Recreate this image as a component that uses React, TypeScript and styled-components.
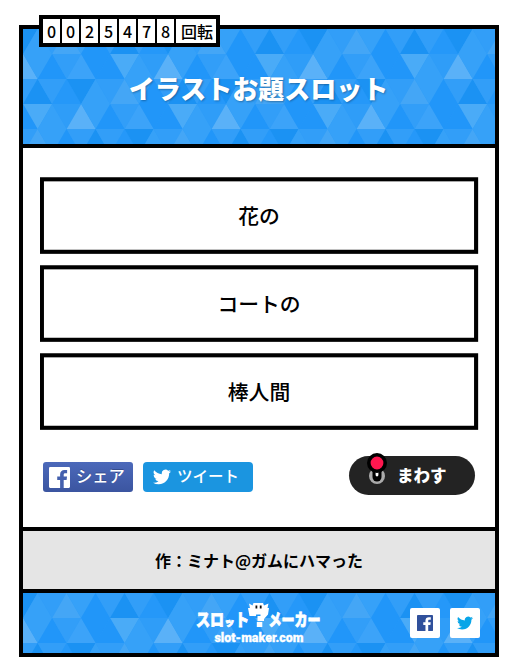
import React from "react";
import styled, { createGlobalStyle } from "styled-components";

const GlobalStyle = createGlobalStyle`
  * { box-sizing: border-box; }
  body {
    margin: 0;
    background: #fff;
    color: #000;
    font-family: "Noto Sans CJK JP", sans-serif;
  }
`;

const Page = styled.div`
  position: relative;
  height: 665px;
  padding: 25px 7px 8px 19px;
  overflow: hidden;
`;

const Machine = styled.div`
  display: flex;
  flex-direction: column;
  width: 480px;
  height: 632px;
  border: 4px solid #000;
`;

const Counter = styled.div`
  position: absolute;
  left: 39px;
  top: 15px;
  display: flex;
  gap: 2px;
  height: 32px;
  padding: 4px;
  background: #000;
`;

const Cell = styled.span<{ $wide?: boolean }>`
  display: flex;
  align-items: center;
  justify-content: center;
  width: ${(p) => (p.$wide ? 40 : 17)}px;
  padding-left: ${(p) => (p.$wide ? 2 : 0)}px;
  background: #fff;
  font-size: 16px;
  font-weight: 500;
  line-height: 24px;
`;

const Header = styled.header`
  position: relative;
  display: flex;
  align-items: center;
  justify-content: center;
  height: 119px;
  padding: 2px 1px 0 0;
  border-bottom: 4px solid #000;
`;

const Title = styled.h1`
  position: relative;
  margin: 0;
  color: #fff;
  font-size: 26px;
  font-weight: 900;
  line-height: 38px;
  text-shadow: 1px 1px 2px rgba(0, 0, 0, 0.3);
`;

const Backdrop = styled.svg`
  position: absolute;
  inset: 0;
  width: 100%;
  height: 100%;
`;

const Main = styled.main`
  height: 379px;
  padding: 29px 17px 0 17px;
`;

const Reels = styled.div`
  display: flex;
  flex-direction: column;
  gap: 11px;
`;

const Reel = styled.svg`
  display: block;
  width: 439px;
  height: 77px;
`;

const Actions = styled.div`
  display: flex;
  align-items: flex-start;
  padding: 26px 3.5px 0 3px;
`;

const ShareButton = styled.a<{ $twitter?: boolean }>`
  display: flex;
  align-items: center;
  width: ${(p) => (p.$twitter ? 110 : 90)}px;
  height: 30px;
  margin: 6px 10px 0 0;
  padding-left: ${(p) => (p.$twitter ? 10 : 6)}px;
  gap: 7px;
  border-radius: ${(p) => (p.$twitter ? 4 : 3)}px;
  background: ${(p) => (p.$twitter ? "#1b95e0" : "linear-gradient(#4c69ba, #3b55a0)")};
  color: #fff;
  font-size: ${(p) => (p.$twitter ? 15.5 : 16.3)}px;
  font-weight: 500;
  white-space: nowrap;
  text-shadow: ${(p) => (p.$twitter ? "none" : "0 -1px 0 #354c8c")};
`;

const ShareLabel = styled.span`
  height: 30px;
  margin-left: -1px;
  line-height: 27px;
`;

const SpinButton = styled.button`
  position: relative;
  width: 125.5px;
  height: 38.5px;
  margin: 0 0 0 auto;
  padding: 0 0 0 48px;
  border: 0;
  border-radius: 20px;
  background: #232323;
  color: #fff;
  font: 900 16.5px/36px "Noto Sans CJK JP", sans-serif;
  text-align: left;
`;

const Lever = styled.svg`
  position: absolute;
  left: 16.5px;
  top: -4px;
`;

const Author = styled.div`
  display: flex;
  align-items: center;
  justify-content: center;
  height: 66px;
  padding-bottom: 1px;
  border: solid #000;
  border-width: 4px 0;
  background: #e5e5e5;
  font-size: 16px;
  font-weight: 700;
`;

const Footer = styled.footer`
  position: relative;
  display: flex;
  align-items: center;
  justify-content: flex-end;
  gap: 10px;
  height: 60px;
  padding-right: 15px;
`;

const Logo = styled.svg`
  position: relative;
  margin-right: 55px;
`;

const Social = styled.a`
  position: relative;
  display: flex;
  align-items: center;
  justify-content: center;
  width: 30px;
  height: 30px;
  border-radius: 2px;
  background: #fff;
`;

// Two alternating bands of triangles; each pair of bands is shifted two cells right.
const bands = [
  {
    up: ["#36a1f8", "#44a6f6", "#2196f9", "#1b92f3", "#2598f9"],
    down: ["#329ef8", "#36a1f8", "#329ef8", "#329ef8", "#1b92f3"],
  },
  {
    up: ["#5ab1f8", "#2196f9", "#3ca3f9", "#2196f9", "#36a1f8"],
    down: ["#36a1f8", "#329ef8", "#2196f9", "#4aabf7", "#2f9df8"],
  },
];

function Triangles({ rows }: { rows: number }) {
  const shapes: React.ReactNode[] = [];
  for (let r = 0; r < rows; r++) {
    const band = bands[r % 2];
    const shift = Math.floor(r / 2) * 2;
    const y = r * 25;
    for (let i = -1; i < 18; i++) {
      const x = i * 29 + (r % 2 ? 0.2 : 14.6);
      const k = (i - shift + 50) % 5;
      shapes.push(
        <polygon key={`u${r}-${i}`} fill={band.up[k]} points={`${x},${y} ${x + 14.5},${y + 25} ${x - 14.5},${y + 25}`} />,
        <polygon key={`d${r}-${i}`} fill={band.down[k]} points={`${x},${y} ${x + 29},${y} ${x + 14.5},${y + 25}`} />
      );
    }
  }
  return (
    <Backdrop>
      <rect width="100%" height="100%" fill="#2d9bf8" />
      {shapes}
    </Backdrop>
  );
}

const BIRD =
  "M23.95 4.57a10 10 0 0 1-2.82.77 4.96 4.96 0 0 0 2.16-2.72c-.95.55-2 .95-3.13 1.18a4.92 4.92 0 0 0-8.38 4.48C7.69 8.1 4.07 6.13 1.64 3.16a4.92 4.92 0 0 0 1.52 6.57 4.9 4.9 0 0 1-2.23-.61v.06a4.92 4.92 0 0 0 3.95 4.83 5 5 0 0 1-2.21.08 4.94 4.94 0 0 0 4.6 3.42A9.87 9.87 0 0 1 0 19.54a13.99 13.99 0 0 0 7.55 2.21c9.05 0 14-7.5 14-13.98 0-.21 0-.42-.02-.63a9.94 9.94 0 0 0 2.46-2.55z";

function Bird({ size, color }: { size: number; color: string }) {
  return (
    <svg width={size} height={size} viewBox="0 0 24 24">
      <path d={BIRD} fill={color} />
    </svg>
  );
}

function FacebookTile({ size, color, mark }: { size: number; color: string; mark: string }) {
  return (
    <svg width={size} height={size} viewBox="0 0 24 24">
      <rect width="24" height="24" rx="1.3" fill={color} />
      <path
        d="M12.7 24v-9.1H9.4v-4h3.3V8.4c0-3.3 2-5.1 5-5.1 1.4 0 2.6.1 3 .15v3.8h-2c-1.6 0-1.9.7-1.9 1.8v1.85h3.8l-.5 4h-3.3V24z"
        fill={mark}
      />
    </svg>
  );
}

function SiteLogo() {
  return (
    <Logo width="150" height="48" viewBox="0 0 150 48" fill="#fff" fontFamily='"Noto Sans CJK JP", sans-serif' fontWeight="900">
      <g fontSize="17" stroke="#fff" strokeWidth="0.8">
        <text x="1" y="27" textLength="28" lengthAdjust="spacingAndGlyphs">スロ</text>
        <text x="29.5" y="27" fontSize="10" textLength="10" lengthAdjust="spacingAndGlyphs">ッ</text>
        <text x="40" y="27" textLength="14" lengthAdjust="spacingAndGlyphs">ト</text>
        <text x="73.5" y="27" textLength="52" lengthAdjust="spacingAndGlyphs">メーカー</text>
      </g>
      <path d="M54 4.5l3.5 2 1-2.5h9.5l1 2.5 4.5-2-1 4.5h1.5l-1 6.5-4 4.5v2h-6.500v-5h3v-1.5h-4.5V17h-6.500l-1.500-8h2z" />
      <rect x="61.8" y="23" width="5.5" height="5" />
      <path d="M60.5 6.5h1.8v3h-1.8zM64.8 6.5h1.8v3h-1.8z" fill="#111" />
      <text x="19.5" y="42.5" fontSize="12.3" fontFamily="Roboto, sans-serif" fontWeight="900" stroke="#fff" strokeWidth="0.3" textLength="89" lengthAdjust="spacingAndGlyphs">
        slot-maker.com
      </text>
    </Logo>
  );
}

const words = ["花の", "コートの", "棒人間"];

export default function App() {
  return (
    <Page>
      <GlobalStyle />
      <Machine>
        <Header>
          <Triangles rows={5} />
          <Title>イラストお題スロット</Title>
        </Header>
        <Main>
          <Reels>
            {words.map((word) => (
              <Reel key={word} viewBox="0 0 439 77">
                <rect x="1.9" y="2.3" width="434.2" height="72.5" fill="#fff" stroke="#000" strokeWidth="4.1" />
                <text x="219" y="47" textAnchor="middle" fontSize="20.8" fontWeight="500">{word}</text>
              </Reel>
            ))}
          </Reels>
          <Actions>
            <ShareButton>
              <FacebookTile size={21} color="#fff" mark="#4460ae" />
              <ShareLabel>シェア</ShareLabel>
            </ShareButton>
            <ShareButton $twitter>
              <Bird size={18} color="#fff" />
              <ShareLabel>ツイート</ShareLabel>
            </ShareButton>
            <SpinButton>
              <Lever width="22" height="34" viewBox="0 0 22 34">
                <circle cx="11" cy="24" r="8" fill="#aaa" />
                <rect x="6.5" y="13" width="9" height="16.5" rx="4.5" fill="#000" />
                <rect x="9.6" y="15" width="2.8" height="9.5" rx="1.4" fill="#fff" />
                <circle cx="11" cy="11" r="8.2" fill="#ff174f" stroke="#000" strokeWidth="3.6" />
              </Lever>
              まわす
            </SpinButton>
          </Actions>
        </Main>
        <Author>作：ミナト@ガムにハマった</Author>
        <Footer>
          <Triangles rows={3} />
          <SiteLogo />
          <Social><FacebookTile size={16} color="#30509b" mark="#fff" /></Social>
          <Social><Bird size={16} color="#08a5e8" /></Social>
        </Footer>
      </Machine>
      <Counter>
        {"0025478".split("").map((digit, i) => (
          <Cell key={i}>{digit}</Cell>
        ))}
        <Cell $wide>回転</Cell>
      </Counter>
    </Page>
  );
}
